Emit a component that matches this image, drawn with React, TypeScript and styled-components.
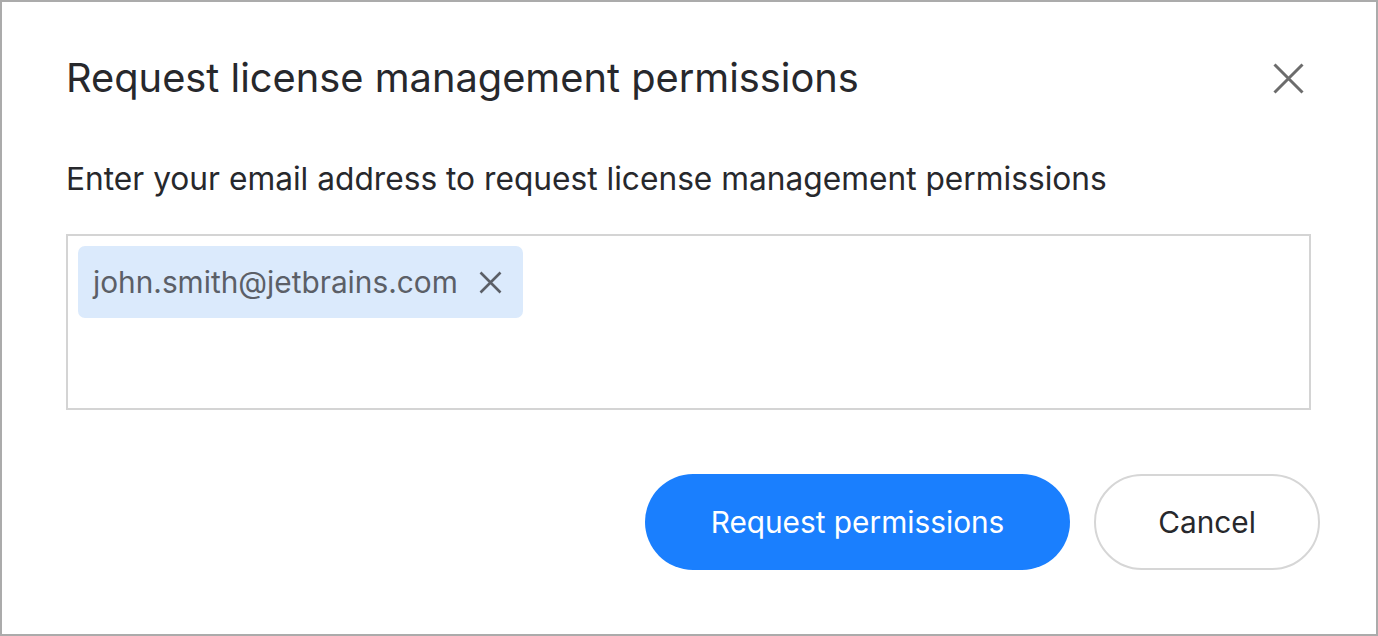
import styled, { createGlobalStyle } from "styled-components";

const GlobalStyle = createGlobalStyle`
    html, body {
        margin: 0;
        padding: 0;
        background: #ffffff;
    }
    * {
        box-sizing: border-box;
    }
`;

const CloseIcon = ({ size, stroke }: { size: number; stroke: number }) => (
    <svg width={size} height={size} viewBox={`0 0 ${size} ${size}`} fill="none">
        <path
            d={`M1.5 1.5L${size - 1.5} ${size - 1.5}M${size - 1.5} 1.5L1.5 ${size - 1.5}`}
            stroke="currentColor"
            strokeWidth={stroke}
        />
    </svg>
);

const App = () => {
    return (
        <>
            <GlobalStyle />
            <Dialog>
                <Header>
                    <Title>Request license management permissions</Title>
                    <CloseButton aria-label="Close">
                        <CloseIcon size={31} stroke={3} />
                    </CloseButton>
                </Header>

                <Description>
                    Enter your email address to request license management permissions
                </Description>

                <EmailField>
                    <Chip>
                        <ChipText>john.smith@jetbrains.com</ChipText>
                        <ChipRemove aria-label="Remove">
                            <CloseIcon size={23} stroke={2.6} />
                        </ChipRemove>
                    </Chip>
                </EmailField>

                <Actions>
                    <PrimaryButton>Request permissions</PrimaryButton>
                    <SecondaryButton>Cancel</SecondaryButton>
                </Actions>
            </Dialog>
        </>
    );
};

export default App;

const Dialog = styled.div`
    width: 1378px;
    height: 636px;
    border: 2px solid #ababab;
    background: #ffffff;
    padding: 54px 56px 0 64px;
    font-family: "Inter", "Noto Sans", sans-serif;
    color: #27282c;
    display: flex;
    flex-direction: column;
`;

const Header = styled.div`
    display: flex;
    align-items: center;
    justify-content: space-between;
    padding-right: 16px;
`;

const Title = styled.h1`
    margin: 0;
    font-size: 39.8px;
    font-weight: 400;
    line-height: 44px;
`;

const CloseButton = styled.button`
    display: flex;
    align-items: center;
    justify-content: center;
    padding: 0;
    border: none;
    background: none;
    color: #6c6c6c;
    cursor: pointer;
`;

const Description = styled.p`
    margin: 59px 0 0;
    font-size: 31.7px;
    line-height: 40px;
    font-weight: 400;
`;

const EmailField = styled.div`
    margin-top: 35px;
    margin-right: 9px;
    height: 176px;
    border: 2px solid #d4d4d4;
    padding: 10px;
    display: flex;
    align-items: flex-start;
`;

const Chip = styled.div`
    display: flex;
    align-items: center;
    gap: 21px;
    height: 72px;
    padding: 0 21px 0 15px;
    background: #dbeafc;
    border-radius: 7px;
`;

const ChipText = styled.span`
    font-size: 29.8px;
    color: #5b5f67;
`;

const ChipRemove = styled.button`
    display: flex;
    padding: 0;
    border: none;
    background: none;
    color: #5b5f67;
    cursor: pointer;
`;

const Actions = styled.div`
    display: flex;
    justify-content: flex-end;
    gap: 24px;
    margin-top: 64px;
`;

const ButtonBase = styled.button`
    height: 96px;
    border-radius: 48px;
    font-family: "Inter", "Noto Sans", sans-serif;
    font-size: 29.8px;
    font-weight: 400;
    cursor: pointer;
`;

const PrimaryButton = styled(ButtonBase)`
    width: 425px;
    border: none;
    background: #1a7ffe;
    color: #ffffff;
`;

const SecondaryButton = styled(ButtonBase)`
    width: 226px;
    border: 2px solid #d6d6d6;
    background: #ffffff;
    color: #27282c;
`;
